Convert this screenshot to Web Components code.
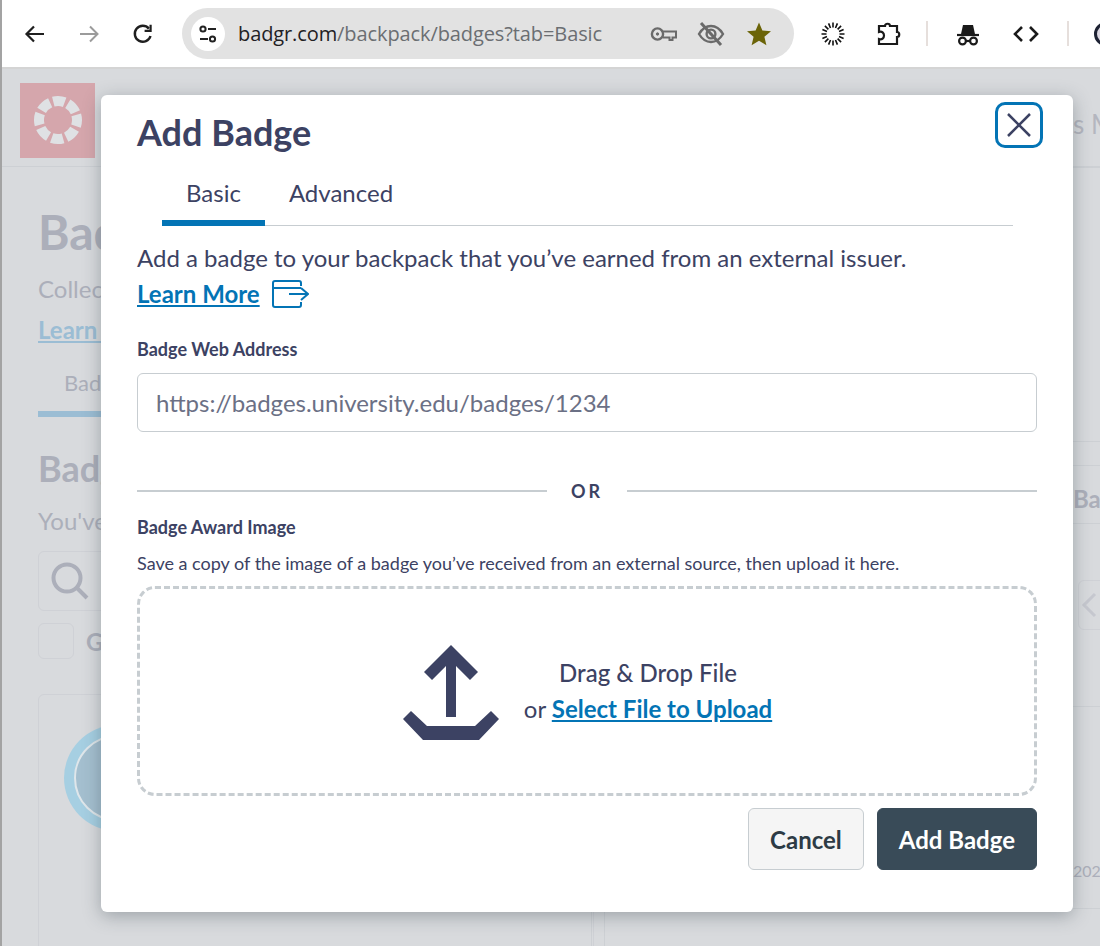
<!DOCTYPE html>
<html lang="en">
<head>
<meta charset="utf-8">
<title>Add Badge</title>
<style>
  html, body { margin: 0; padding: 0; height: 946px; overflow: hidden; background: #d8dadd; }
</style>
</head>
<body>
<app-window>
  <browser-bar slot="bar" url-host="badgr.com" url-path="/backpack/badges?tab=Basic"></browser-bar>
  <backpack-page slot="page"></backpack-page>
  <add-badge-dialog slot="dialog"></add-badge-dialog>
</app-window>

<script>
class AppWindow extends HTMLElement {
    constructor() {
        super();
        this.shadowDOM = this.attachShadow({mode: 'open'});
    }

    connectedCallback() {
        this.shadowDOM.innerHTML = `
            <style>
            :host {
                display: flex;
                flex-direction: column;
                position: relative;
                width: 1100px;
                height: 946px;
                overflow: hidden;
                background: #d8dadd;
            }
            .strip {
                position: absolute;
                left: 0;
                top: 0;
                bottom: 0;
                width: 2px;
                background: #a3a3a3;
                z-index: 3;
            }
            </style>
            <div class="strip"></div>
            <slot name="bar"></slot>
            <slot name="page"></slot>
            <slot name="dialog"></slot>
        `;
    }
}

class BrowserBar extends HTMLElement {
    constructor() {
        super();
        this.shadowDOM = this.attachShadow({mode: 'open'});
    }

    connectedCallback() {
        const host = this.getAttribute('url-host');
        const path = this.getAttribute('url-path');
        this.shadowDOM.innerHTML = `
            <style>
            :host {
                display: flex;
                align-items: center;
                flex: none;
                height: 69px;
                box-sizing: border-box;
                padding: 0 0 0 23px;
                background: #fff;
                border-bottom: 2px solid #d4d4d4;
                overflow: hidden;
                font-family: "Open Sans", "Noto Sans", sans-serif;
            }
            svg { display: block; flex: none; }
            .nav { display: flex; gap: 30px; margin-right: 27px; }
            .pill {
                display: flex;
                align-items: center;
                flex: none;
                box-sizing: border-box;
                width: 612px;
                height: 51px;
                padding: 0 22px 0 9px;
                border-radius: 26px;
                background: #e2e2e2;
            }
            .tune {
                display: flex;
                align-items: center;
                justify-content: center;
                flex: none;
                width: 34px;
                height: 34px;
                border-radius: 50%;
                background: #fff;
                margin-right: 13px;
            }
            .url {
                flex: 1;
                font-size: 20px;
                letter-spacing: -0.1px;
                white-space: nowrap;
                color: #6b6e72;
            }
            .url b { font-weight: 400; color: #1f2124; }
            .pill-icons { display: flex; align-items: center; gap: 19px; }
            .tools { display: flex; align-items: center; margin-left: 26px; }
            .sep { width: 2px; height: 25px; background: #e6dfdc; }
            .avatar {
                width: 24px;
                height: 24px;
                border-radius: 50%;
                background: #dcd8e2;
                border: 3px solid #1d2233;
                box-sizing: border-box;
                flex: none;
            }
            </style>
            <div class="nav">
                <svg width="24" height="24" viewBox="0 0 24 24" fill="none" stroke="#1f1f1f" stroke-width="2.2"><path d="M21 12H4M11 4.5 3.5 12l7.5 7.5"/></svg>
                <svg width="24" height="24" viewBox="0 0 24 24" fill="none" stroke="#9b9b9b" stroke-width="2"><path d="M3 12h17M13 4.5 20.5 12 13 19.5"/></svg>
                <svg width="24" height="24" viewBox="0 0 24 24" fill="none" stroke="#1f1f1f" stroke-width="2.4"><path d="M19.5 14a8 8 0 1 1-1.6-7.4"/><path d="M19.6 2.8v6h-6" stroke-width="2.2"/></svg>
            </div>
            <div class="pill">
                <span class="tune">
                    <svg width="22" height="22" viewBox="0 0 22 22" fill="none" stroke="#222" stroke-width="2"><circle cx="6" cy="6" r="2.6"/><path d="M11 6h8M3 16h8"/><circle cx="15.5" cy="16" r="2.6"/></svg>
                </span>
                <span class="url"><b>${host}</b>${path}</span>
                <span class="pill-icons">
                    <svg width="28" height="18" viewBox="0 0 28 18" fill="none" stroke="#6a6a6a" stroke-width="2.4"><circle cx="7.5" cy="9" r="5.6"/><circle cx="7.5" cy="9" r="1.2" fill="#6a6a6a" stroke-width="1"/><path d="M13 6.5h13v6h-3.5v2.5h-3v-2.5H13" stroke-width="2"/></svg>
                    <svg width="28" height="28" viewBox="0 0 28 28" fill="none" stroke="#6a6a6a" stroke-width="2.4"><path d="M2 14c3-5 7-8 12-8s9 3 12 8c-3 5-7 8-12 8S5 19 2 14z"/><circle cx="14" cy="14" r="4.4"/><path d="M4 3l20 22" stroke-width="3"/></svg>
                    <svg width="26" height="26" viewBox="0 0 26 26" style="margin-left:2px"><path fill="#6b6408" d="M13 1.5l3.4 8 8.6.7-6.6 5.6 2 8.4L13 19.8l-7.4 4.4 2-8.4L1 10.2l8.6-.7z"/></svg>
                </span>
            </div>
            <div class="tools">
                <svg width="26" height="26" viewBox="0 0 26 26" fill="none" stroke="#111" stroke-width="1.6">
                    <g id="rays"><path d="M13 1.5v5M13 19.5v5M1.5 13h5M19.5 13h5M4.9 4.9l3.5 3.5M17.6 17.6l3.5 3.5M4.9 21.1l3.5-3.5M17.6 8.4l3.5-3.5M8.6 2.4l1.9 4.6M15.5 19l1.9 4.6M2.4 8.6l4.6 1.9M19 15.5l4.6 1.9M2.4 17.4l4.6-1.9M19 10.5l4.6-1.9M8.6 23.6l1.9-4.6M15.5 7l1.9-4.6"/></g>
                </svg>
                <svg width="26" height="26" viewBox="0 0 26 26" fill="none" stroke="#1a1a1a" stroke-width="2.2" style="margin-left:30px"><path d="M3 5h6c0-3 5-3 5 0h7v6c3 0 3 5 0 5v7H3v-5c3 1 5-1 5-3.500S6 10 3 11z"/></svg>
                <span class="sep" style="margin-left:24px"></span>
                <svg width="26" height="26" viewBox="0 0 26 26" fill="none" stroke="#1a1a1a" stroke-width="2.2" style="margin-left:27px"><path d="M2 14h22" /><path d="M6 13l2-9h10l2 9z" fill="#1a1a1a" stroke="none"/><circle cx="7.500" cy="20" r="3.400"/><circle cx="18.500" cy="20" r="3.400"/><path d="M11 20h4"/></svg>
                <svg width="26" height="20" viewBox="0 0 26 20" fill="none" stroke="#1a1a1a" stroke-width="2.6" style="margin-left:32px"><path d="M9 3l-7 7 7 7M17 3l7 7-7 7"/></svg>
                <span class="sep" style="margin-left:28px"></span>
                <span class="avatar" style="margin-left:25px"></span>
            </div>
        `;
    }
}

class BackpackPage extends HTMLElement {
    constructor() {
        super();
        this.shadowDOM = this.attachShadow({mode: 'open'});
    }

    connectedCallback() {
        this.shadowDOM.innerHTML = `
            <style>
            :host {
                display: block;
                flex: 1;
                min-height: 0;
                overflow: hidden;
                color: #acafba;
                font-family: Lato, "Liberation Sans", sans-serif;
            }
            .top {
                display: flex;
                align-items: center;
                justify-content: space-between;
                box-sizing: border-box;
                height: 98px;
                padding: 13px 0 8px 20px;
                border-bottom: 1px solid #cdd0d4;
            }
            .logo {
                display: flex;
                align-items: center;
                justify-content: center;
                width: 75px;
                height: 75px;
                background: #d5a6ac;
            }
            .user { font-size: 24px; color: #b4b6bf; margin-right: -9px; margin-top: -10px; }
            .main { padding: 0 0 0 38px; }
            h1 { margin: 35px 0 0; font-size: 48px; line-height: 60px; font-weight: 700; }
            .lead { margin: 12px 0 0; font-size: 24px; line-height: 30px; }
            a { color: #9bbdd4; font-weight: 700; font-size: 24px; line-height: 30px; display: inline-block; margin-top: 11px; }
            .tab {
                width: 90px;
                margin-top: 24px;
                padding: 0 0 14px 26px;
                box-sizing: border-box;
                border-bottom: 6px solid #9bbdd4;
                font-size: 22px;
                line-height: 28px;
            }
            h2 { margin: 29px 0 0; font-size: 36px; line-height: 44px; font-weight: 700; }
            .you { margin: 16px 0 0; font-size: 24px; line-height: 30px; }
            .search {
                display: flex;
                align-items: center;
                box-sizing: border-box;
                width: 400px;
                height: 60px;
                margin-top: 15px;
                padding-left: 11px;
                border: 1px solid #cfd1d6;
                border-radius: 6px;
            }
            .check { display: flex; align-items: center; gap: 12px; margin-top: 12px; font-size: 24px; font-weight: 700; }
            .box { width: 36px; height: 36px; box-sizing: border-box; border: 1px solid #cfd1d6; border-radius: 6px; }
            .card {
                box-sizing: border-box;
                width: 556px;
                height: 300px;
                margin-top: 35px;
                padding: 30px 0 0 25px;
                border: 1px solid #cfd1d6;
                border-radius: 6px;
            }
            .side { position: absolute; left: 1073px; right: 0; top: 0; }
            .rule { position: absolute; left: 0; right: 0; height: 1px; background: #cdd0d4; }
            .side-txt { position: absolute; left: 0; white-space: nowrap; }
            .pager { position: absolute; left: 5px; top: 580px; width: 40px; height: 50px; box-sizing: border-box; border: 1px solid #cfd1d6; border-radius: 6px; }
            .pos { position: absolute; left: 591px; top: 720px; width: 1px; height: 226px; background: #cdd0d4; }
            .pos2 { position: absolute; left: 604px; top: 720px; width: 1px; height: 226px; background: #cdd0d4; }
            </style>
            <div class="top">
                <div class="logo">
                    <svg width="50" height="50" viewBox="0 0 50 50">
                        <circle cx="25" cy="25" r="19" fill="none" stroke="#dfe1e4" stroke-width="10" stroke-dasharray="11.500 3.420" transform="rotate(-16 25 25)"/>
                        <g fill="#dfe1e4">
                            <circle cx="25" cy="9" r="0"/>
                        </g>
                    </svg>
                </div>
                <span class="user"></span>
            </div>
            <div class="main">
                <h1>Badges</h1>
                <p class="lead">Collect badges</p>
                <a href="#">Learn More</a>
                <div class="tab">Badges</div>
                <h2>Badges</h2>
                <p class="you">You've earned</p>
                <div class="search">
                    <svg width="40" height="40" viewBox="0 0 40 40" fill="none" stroke="#acafba" stroke-width="4"><circle cx="17" cy="17" r="13.500"/><path d="M27 27l10 10"/></svg>
                </div>
                <div class="check"><span class="box"></span>Group</div>
                <div class="card">
                    <svg width="90" height="106" viewBox="0 0 90 106">
                        <circle cx="53" cy="53" r="53" fill="#a6cfe2"/>
                        <circle cx="53" cy="53" r="42" fill="#a4bfcf" stroke="#dfe6ea" stroke-width="2"/>
                    </svg>
                </div>
            </div>
            <div class="pos"></div>
            <div class="pos2"></div>
            <div class="side">
                <span class="side-txt" style="top:108px;font-size:26px;color:#b4b6bf">s Menu</span>
                <div class="rule" style="top:167px"></div>
                <div class="rule" style="top:441px"></div>
                <div class="rule" style="top:465px"></div>
                <div class="rule" style="top:523px"></div>
                <span class="side-txt" style="top:484px;font-size:24px;font-weight:700">Badges</span>
                <div class="pager">
                    <svg width="20" height="48" viewBox="0 0 20 48" fill="none" stroke="#c6c8cf" stroke-width="3"><path d="M16 13L5 24l11 11"/></svg>
                </div>
                <div class="rule" style="top:706px"></div>
                <span class="side-txt" style="top:861px;font-size:16px">2024</span>
                <div class="rule" style="top:908px"></div>
            </div>
        `;
    }
}

class BadgeTabs extends HTMLElement {
    constructor() {
        super();
        this.shadowDOM = this.attachShadow({mode: 'open'});
    }

    connectedCallback() {
        this.shadowDOM.innerHTML = `
            <style>
            :host {
                display: flex;
                box-sizing: border-box;
                margin: 0 24px 0 25px;
                border-bottom: 1px solid #c7cdd1;
                font-size: 24px;
                line-height: 30px;
            }
            .tab { padding: 23px 24px 17px; }
            .on { box-shadow: inset 0 -6px 0 #0374b5; padding-bottom: 18px; margin-bottom: -1px; }
            </style>
            <div class="tab on">Basic</div>
            <div class="tab">Advanced</div>
        `;
    }
}

class DropZone extends HTMLElement {
    constructor() {
        super();
        this.shadowDOM = this.attachShadow({mode: 'open'});
    }

    connectedCallback() {
        this.shadowDOM.innerHTML = `
            <style>
            :host {
                display: flex;
                align-items: center;
                justify-content: center;
                gap: 24px;
                box-sizing: border-box;
                height: 210px;
                border: 3px dashed #c7cdd1;
                border-radius: 18px;
                font-size: 24px;
                line-height: 36px;
            }
            svg { display: block; margin-top: 3px; }
            .msg { text-align: center; font-weight: 400; }
            .strong { font-weight: 500; }
            a { color: #0374b5; font-weight: 700; }
            </style>
            <svg width="98" height="98" viewBox="0 0 98 98" fill="#3c4263">
                <path d="M49 1 76 28 68 36 54 22V73H44V22L30 36 22 28Z"/>
                <path d="M9 67 25 82H73L89 67 97 75 77 96H21L1 75Z"/>
            </svg>
            <div class="msg">
                <div class="strong">Drag &amp; Drop File</div>
                <div>or <a href="#">Select File to Upload</a></div>
            </div>
        `;
    }
}

class AddBadgeDialog extends HTMLElement {
    constructor() {
        super();
        this.shadowDOM = this.attachShadow({mode: 'open'});
    }

    connectedCallback() {
        this.shadowDOM.innerHTML = `
            <style>
            :host {
                position: absolute;
                left: 101px;
                top: 95px;
                width: 972px;
                height: 817px;
                box-sizing: border-box;
                padding: 0 36px;
                background: #fff;
                border-radius: 6px;
                box-shadow: 0 4px 18px rgba(45, 59, 69, 0.35);
                color: #3c4263;
                font-family: Lato, "Liberation Sans", sans-serif;
                z-index: 2;
            }
            h1 { margin: 0; padding-top: 14px; font-size: 36px; line-height: 46px; font-weight: 700; }
            .close {
                position: absolute;
                right: 30px;
                top: 7px;
                display: flex;
                align-items: center;
                justify-content: center;
                box-sizing: border-box;
                width: 48px;
                height: 46px;
                border: 3px solid #0374b5;
                border-radius: 10px;
                background: #fff;
                padding: 0;
            }
            .intro { margin: 14px 0 0; font-size: 24px; line-height: 36px; }
            a { color: #0374b5; font-weight: 700; }
            .more { display: flex; align-items: center; gap: 12px; }
            svg { display: block; }
            label, .label { display: block; font-size: 18px; line-height: 24px; font-weight: 700; }
            .web { margin-top: 25px; }
            .field {
                display: flex;
                align-items: center;
                box-sizing: border-box;
                height: 59px;
                margin-top: 12px;
                padding: 0 18px;
                border: 1px solid #c7cdd1;
                border-radius: 6px;
                font-size: 24px;
                color: #6b7085;
            }
            .or {
                display: flex;
                align-items: center;
                gap: 24px;
                margin-top: 47px;
                font-size: 18px;
                line-height: 24px;
                font-weight: 700;
                letter-spacing: 3px;
            }
            .or i { flex: 1; height: 2px; background: #c7cdd1; }
            .award { margin-top: 12px; }
            .hint { margin: 12px 0 11px; font-size: 18px; line-height: 24px; }
            .actions { display: flex; justify-content: flex-end; gap: 13px; margin-top: 12px; }
            button.act {
                box-sizing: border-box;
                height: 62px;
                padding: 0 21px;
                border-radius: 6px;
                border: 1px solid #c7cdd1;
                background: #f5f5f5;
                color: #2d3b45;
                font: 700 24px Lato, "Liberation Sans", sans-serif;
            }
            button.primary { background: #394b58; border-color: #394b58; color: #fff; }
            </style>
            <h1>Add Badge</h1>
            <button class="close" type="button" aria-label="Close">
                <svg width="26" height="26" viewBox="0 0 26 26" fill="none" stroke="#3c4263" stroke-width="2.500"><path d="M2 2l22 22M24 2L2 24"/></svg>
            </button>
            <badge-tabs></badge-tabs>
            <div class="intro">
                <div>Add a badge to your backpack that you’ve earned from an external issuer.</div>
                <div class="more"><a href="#">Learn More</a>
                    <svg width="37" height="28" viewBox="0 0 37 28" fill="none" stroke="#0374b5" stroke-width="2"><path d="M29 6V3a2 2 0 0 0-2-2H3a2 2 0 0 0-2 2v22a2 2 0 0 0 2 2h24a2 2 0 0 0 2-2v-3M1 8h28M17 14h19M29 8l7 6-7 6"/></svg>
                </div>
            </div>
            <label class="web">Badge Web Address</label>
            <div class="field">https://badges.university.edu/badges/1234</div>
            <div class="or"><i></i><span>OR</span><i></i></div>
            <div class="label award">Badge Award Image</div>
            <p class="hint">Save a copy of the image of a badge you’ve received from an external source, then upload it here.</p>
            <drop-zone></drop-zone>
            <div class="actions">
                <button class="act" type="button">Cancel</button>
                <button class="act primary" type="button">Add Badge</button>
            </div>
        `;
    }
}

customElements.define('app-window', AppWindow);
customElements.define('browser-bar', BrowserBar);
customElements.define('backpack-page', BackpackPage);
customElements.define('badge-tabs', BadgeTabs);
customElements.define('drop-zone', DropZone);
customElements.define('add-badge-dialog', AddBadgeDialog);
</script>
</body>
</html>
